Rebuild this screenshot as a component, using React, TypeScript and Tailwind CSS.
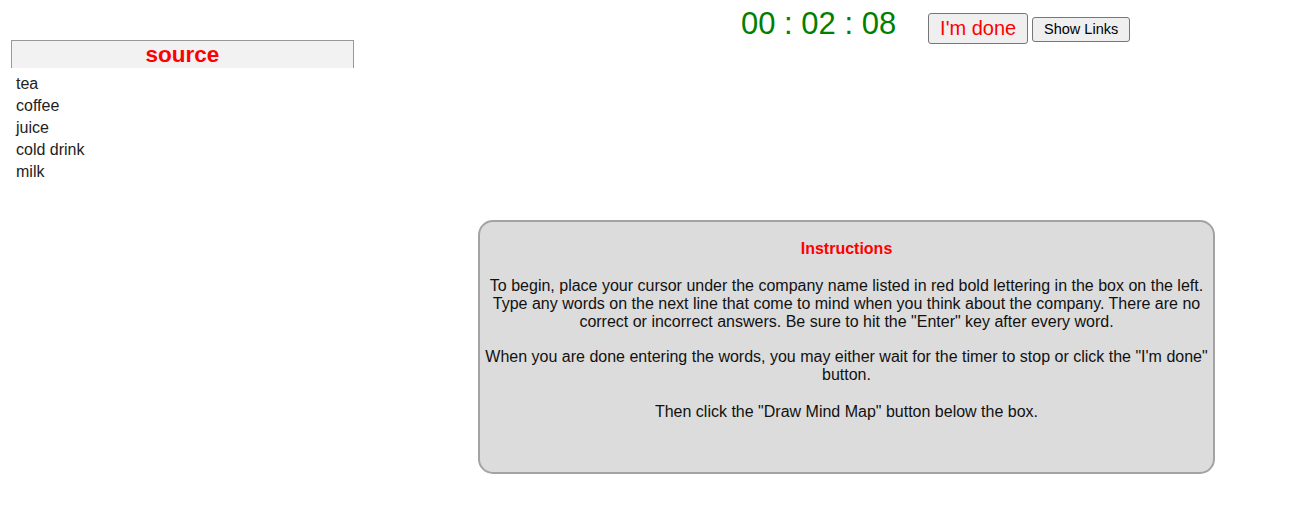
import React from "react";

export default function App() {
  const items = ["tea", "coffee", "juice", "cold drink", "milk"];
  return (
    <div className="flex w-[1306px] h-[521px] bg-white text-[16px] font-['Liberation_Sans',Arial,sans-serif] text-[#222]">
      <div className="w-[354px] shrink-0 pl-[11px] pt-[40px]">
        <div className="w-[343px] h-[28px] pt-[2px] bg-[#f2f2f2] border border-b-0 border-[#999] flex items-center justify-center">
          <span className="text-[22.5px] font-bold text-[#ff0000] leading-none">source</span>
        </div>
        <ul className="pl-[5px] pt-[5px]">
          {items.map((t) => (
            <li key={t} className="leading-[22px]">{t}</li>
          ))}
        </ul>
      </div>
      <div className="w-[952px] shrink-0 flex flex-col">
        <div className="flex items-baseline pl-[387px] pt-[6px]">
          <span className="text-[31px] text-[#008000] leading-[36px]">00 : 02 : 08</span>
          <button className="ml-[32px] relative top-[1px] w-[100px] h-[31px] bg-[#efefef] border border-[#767676] rounded-[3px] text-[20px] text-[#ff0000] leading-none">I'm done</button>
          <button className="ml-[4px] w-[98px] h-[25px] bg-[#efefef] border border-[#767676] rounded-[3px] text-[14.5px] text-black leading-none">Show Links</button>
        </div>
        <div className="ml-[124px] mt-[177px] w-[737px] h-[254px] box-border border-2 border-[#a3a3a3] rounded-[15px] bg-[#dcdcdc] text-center text-[#111] leading-[18px]">
          <p className="mt-[18px] font-bold text-[#ff0000]">Instructions</p>
          <p className="mt-[19px]">
            To begin, place your cursor under the company name listed in red bold lettering in the box on the left. Type any words on the next line that come to mind when you think about the company. There are no correct or incorrect answers. Be sure to hit the "Enter" key after every word.
          </p>
          <p className="mt-[17px]">
            When you are done entering the words, you may either wait for the timer to stop or click the "I'm done" button.
          </p>
          <p className="mt-[19px]">Then click the "Draw Mind Map" button below the box.</p>
        </div>
      </div>
    </div>
  );
}
